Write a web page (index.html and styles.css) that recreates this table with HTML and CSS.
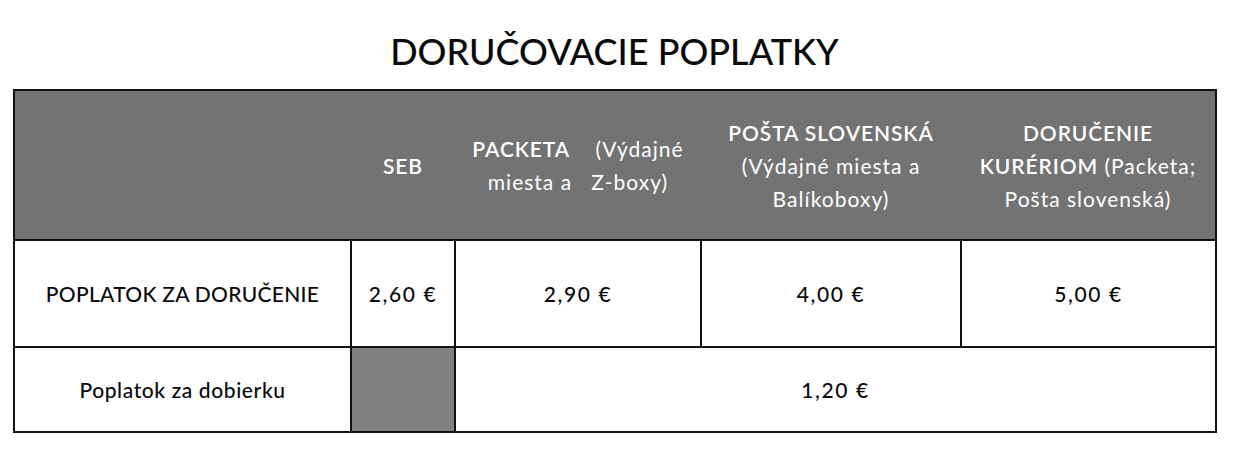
FILE: index.html
```html
<!DOCTYPE html>
<html lang="sk">
<head>
<meta charset="utf-8">
<title>Doručovacie poplatky</title>
<link rel="stylesheet" href="styles.css">
</head>
<body>
<div class="page">
  <h1 class="title">DORUČOVACIE POPLATKY</h1>
  <table class="fees">
    <colgroup>
      <col class="c-label">
      <col class="c-seb">
      <col class="c-packeta">
      <col class="c-posta">
      <col class="c-kurier">
    </colgroup>
    <thead>
      <tr>
        <th></th>
        <th><b>SEB</b></th>
        <th><b>PACKETA</b>&nbsp;&nbsp;&nbsp; (Výdajné<br>miesta a &nbsp; Z-boxy)</th>
        <th><b>POŠTA SLOVENSKÁ</b><br>(Výdajné miesta a<br>Balíkoboxy)</th>
        <th><b>DORUČENIE<br>KURÉRIOM</b> (Packeta;<br>Pošta slovenská)</th>
      </tr>
    </thead>
    <tbody>
      <tr class="r-fee">
        <td class="label">POPLATOK ZA DORUČENIE</td>
        <td class="price">2,60 €</td>
        <td class="price">2,90 €</td>
        <td class="price">4,00 €</td>
        <td class="price">5,00 €</td>
      </tr>
      <tr class="r-cod">
        <td class="label small">Poplatok za dobierku</td>
        <td class="empty"></td>
        <td class="price" colspan="3">1,20 €</td>
      </tr>
    </tbody>
  </table>
</div>
</body>
</html>
```
FILE: styles.css
```css
html, body {
  margin: 0;
  padding: 0;
  background: #fff;
}
body {
  font-family: "Lato", "Liberation Sans", sans-serif;
  color: #0a0a0a;
}
.page {
  padding: 0 30px 0 13px;
}
.title {
  margin: 0;
  padding-top: 32px;
  height: 89px;
  box-sizing: border-box;
  text-align: center;
  font-size: 36px;
  font-weight: 500;
  line-height: 38px;
  color: #0a0a0a;
}
.fees {
  width: 1202px;
  border-collapse: collapse;
  border: 2px solid #111;
  table-layout: fixed;
}
.c-label { width: 337px; }
.c-seb { width: 104px; }
.c-packeta { width: 246px; }
.c-posta { width: 260px; }
.c-kurier { width: 255px; }
.fees th {
  background: #737373;
  color: #fff;
  font-weight: 400;
  font-size: 21px;
  letter-spacing: 1px;
  line-height: 33px;
  height: 148px;
  padding: 0 2px;
  white-space: nowrap;
  text-align: center;
  vertical-align: middle;
  border: none;
}
.fees th b {
  font-weight: 600;
  letter-spacing: 0.9px;
}
.fees thead tr {
  border-bottom: 2px solid #111;
}
.fees td {
  border: 2px solid #111;
  text-align: center;
  vertical-align: middle;
  font-size: 21px;
  font-weight: 500;
  letter-spacing: 0.3px;
  padding: 0 4px;
}
.fees td.price {
  letter-spacing: 1.6px;
}
.r-fee td {
  height: 105px;
}
.r-cod td {
  height: 83px;
}
.fees td.small {
  font-size: 21px;
  letter-spacing: 0.6px;
}
.fees td.empty {
  background: #808080;
}
```
